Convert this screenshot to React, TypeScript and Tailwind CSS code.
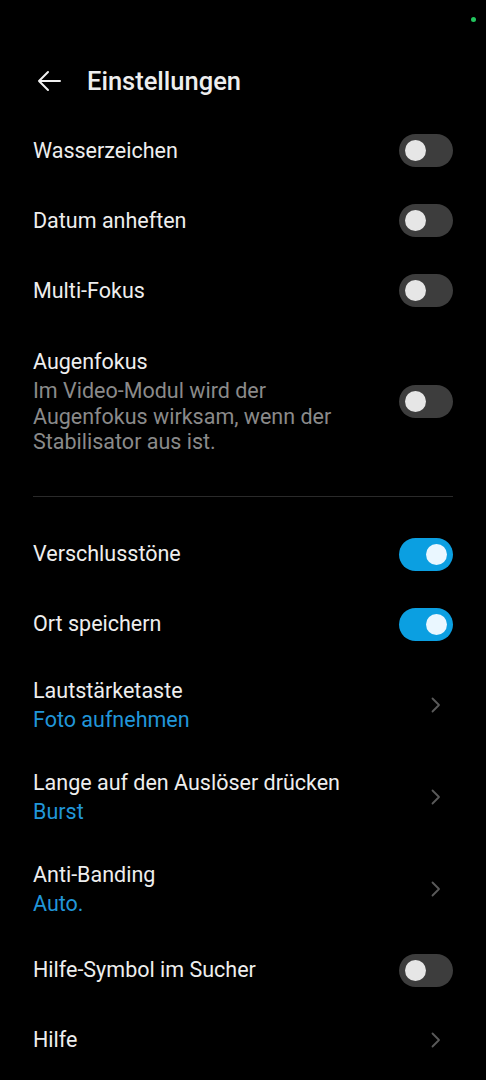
import React from "react";

const font = { fontFamily: "Roboto, 'Noto Sans', sans-serif" };

function Toggle({ on }: { on?: boolean }) {
  return (
    <div
      className={`flex h-[33px] w-[54px] shrink-0 items-center rounded-full px-[6px] ${
        on ? "justify-end bg-[#0b9fe1]" : "justify-start bg-[#3d3d3d]"
      }`}
    >
      <div className={`h-[21px] w-[21px] rounded-full ${on ? "bg-[#eaf7ff]" : "bg-[#e6e6e6]"}`} />
    </div>
  );
}

function Chevron() {
  return (
    <div className="flex w-[54px] shrink-0 justify-end pr-[12px]">
      <svg width="10" height="16" viewBox="0 0 10 16" fill="none">
        <path d="M1.5 1.5 L8 8 L1.5 14.5" stroke="#5a5a5a" strokeWidth="1.8" strokeLinecap="round" strokeLinejoin="round" />
      </svg>
    </div>
  );
}

function SwitchRow({ label, on }: { label: string; on?: boolean }) {
  return (
    <div className="flex h-[70px] items-center justify-between pt-[1px]">
      <span className="text-[21.5px] leading-[26px] text-[#eeeeee]">{label}</span>
      <Toggle on={on} />
    </div>
  );
}

function NavRow({ label, value }: { label: string; value: string }) {
  return (
    <div className="flex h-[92px] items-center justify-between pt-[1px]">
      <div className="flex flex-col">
        <span className="text-[21.5px] leading-[26px] text-[#eeeeee]">{label}</span>
        <span className="mt-[3px] text-[21.5px] leading-[26px] text-[#2196d9]">{value}</span>
      </div>
      <Chevron />
    </div>
  );
}

export default function App() {
  return (
    <div className="relative min-h-[1080px] w-full bg-black" style={font}>
      <div className="absolute left-[471px] top-[17px] h-[5px] w-[5px] rounded-full bg-[#22c55e]" />
      <div className="h-[45px]" />
      <div className="flex h-[70px] items-center px-[37px] pt-[2px]">
        <svg width="24" height="22" viewBox="0 0 24 22" fill="none">
          <path d="M23 11 H2 M11 2 L2 11 L11 20" stroke="#f0f0f0" strokeWidth="2" strokeLinecap="round" strokeLinejoin="round" />
        </svg>
        <span className="ml-[26px] text-[25.5px] font-medium leading-[30px] text-[#eeeeee]">Einstellungen</span>
      </div>
      <div className="px-[33px]">
        <SwitchRow label="Wasserzeichen" />
        <SwitchRow label="Datum anheften" />
        <SwitchRow label="Multi-Fokus" />
        <div className="flex items-center justify-between pb-[21px] pt-[24px]">
          <div className="flex flex-col pr-4">
            <span className="text-[21.5px] leading-[26px] text-[#eeeeee]">Augenfokus</span>
            <span className="mt-[3px] text-[21.5px] leading-[25.5px] text-[#8a8a8a]">
              Im Video-Modul wird der
              <br />
              Augenfokus wirksam, wenn der
              <br />
              Stabilisator aus ist.
            </span>
          </div>
          <Toggle />
        </div>
        <div className="mt-[20px] h-px bg-[#2a2a2a]" />
        <div className="h-[22px]" />
        <SwitchRow label="Verschlusstöne" on />
        <SwitchRow label="Ort speichern" on />
        <NavRow label="Lautstärketaste" value="Foto aufnehmen" />
        <NavRow label="Lange auf den Auslöser drücken" value="Burst" />
        <NavRow label="Anti-Banding" value="Auto." />
        <SwitchRow label="Hilfe-Symbol im Sucher" />
        <div className="flex h-[70px] items-center justify-between pt-[1px]">
          <span className="text-[21.5px] leading-[26px] text-[#eeeeee]">Hilfe</span>
          <Chevron />
        </div>
      </div>
    </div>
  );
}
